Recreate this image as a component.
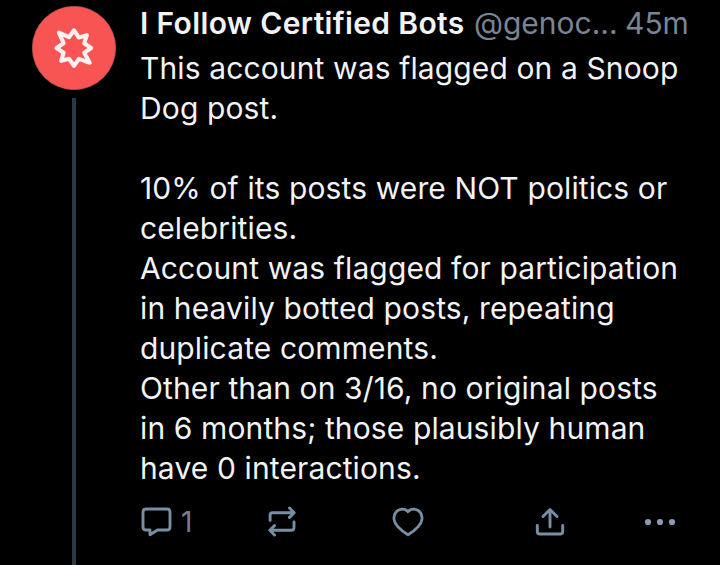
<script>
  const lines = [
    'This account was flagged on a Snoop',
    'Dog post.',
    '',
    '10% of its posts were NOT politics or',
    'celebrities.',
    'Account was flagged for participation',
    'in heavily botted posts, repeating',
    'duplicate comments.',
    'Other than on 3/16, no original posts',
    'in 6 months; those plausibly human',
    'have 0 interactions.'
  ];
</script>

<article class="post">
  <div class="rail">
    <svg class="avatar" width="84" height="84" viewBox="0 0 84 84" aria-label="Avatar">
      <circle cx="42" cy="42" r="41.7" fill="#f85454" stroke="#a95458" stroke-width=".7" />
      <path
        d="M42 24.3 L46.8 31.5 L54.9 29.2 L52.2 37.3 L59.2 42 L52.2 46.8 L57.7 56.8 L47 52.8 L42 59.8 L37 52.8 L29.2 54.8 L31.6 46.8 L24.5 42 L31.6 37.2 L26.9 26.6 L37 31.2 Z"
        fill="none" stroke="#fff1f1" stroke-width="4.1" stroke-linejoin="round" />
    </svg>
    <div class="thread"></div>
  </div>

  <div class="content">
    <header>
      <span class="name">I Follow Certified Bots</span>
      <span class="handle">@genoc...</span>
      <span class="time">45m</span>
    </header>
    <div class="body">{lines.join('\n')}</div>
    <footer>
      <button class="reply" aria-label="Reply">
        <svg width="36" height="36" viewBox="0 0 36 36">
          <path d="M7 5H27Q30 5 30 8V23Q30 26 27 26H17.5L10 30.7V26H6Q3 26 3 23V8Q3 5 6 5Z" />
        </svg>
        <span>1</span>
      </button>
      <button class="repost" aria-label="Repost">
        <svg width="36" height="36" viewBox="0 0 36 36">
          <path d="M6.1 16.5V11Q6.1 8.7 8.4 8.7H29M25.5 4L30.2 8.7L25.5 13.4M30 18V23.5Q30 26.3 27.2 26.3H7M10.5 21.6L5.8 26.3L10.5 31" />
        </svg>
      </button>
      <button class="like" aria-label="Like">
        <svg width="36" height="36" viewBox="0 0 36 36">
          <path d="M18 7.6C14.5 4 9 4.5 6 8.2C2.5 12.6 4 18.2 7.8 22.6C10.4 25.5 14 28.4 18 30.8C22 28.4 25.6 25.5 28.2 22.6C32 18.2 33.5 12.6 30 8.2C27 4.5 21.5 4 18 7.6Z" />
        </svg>
      </button>
      <button class="share" aria-label="Share">
        <svg width="36" height="36" viewBox="0 0 36 36">
          <path d="M18 23V6M11 12.5L18 5.5L25 12.5M5.3 21.5V27.5Q5.3 30 7.8 30H28.2Q30.7 30 30.7 27.5V21.5" />
        </svg>
      </button>
      <button class="more" aria-label="More">
        <svg width="36" height="36" viewBox="0 0 36 36">
          <g class="dots"><circle cx="6" cy="18" r="3.1" /><circle cx="18" cy="18" r="3.1" /><circle cx="30" cy="18" r="3.1" /></g>
        </svg>
      </button>
    </footer>
  </div>
</article>

<style>
  :global(body) { margin: 0; background: #000; }
  .post {
    display: flex;
    box-sizing: border-box;
    width: 720px;
    height: 565px;
    padding: 6px 0 0 32px;
    overflow: hidden;
    background: #000;
    color: #f1f3f5;
    font-family: Inter, sans-serif;
    font-size: 30px;
    line-height: 40px;
  }
  .rail { display: flex; flex-direction: column; align-items: center; width: 84px; margin-right: 24px; }
  .avatar { display: block; flex: none; }
  .thread { flex: 1; width: 4px; margin-top: 8px; background: #2b3845; }
  .content { flex: none; width: 560px; margin-top: -3px; }
  header { display: flex; height: 45px; white-space: nowrap; color: #798594; }
  .name { width: 334px; color: #f1f3f5; font-weight: 600; letter-spacing: 0.36px; }
  .handle { width: 151px; }
  .body { white-space: pre; height: 440px; letter-spacing: 0.12px; }
  footer { display: flex; align-items: center; height: 36px; margin-top: 16px; color: #788ea5; }
  button {
    display: flex;
    align-items: center;
    gap: 5px;
    padding: 0;
    border: 0;
    background: none;
    color: inherit;
    font: inherit;
    font-size: 28px;
  }
  .reply span { color: #75828f; }
  svg { display: block; }
  footer path { fill: none; stroke: currentColor; stroke-width: 2.9; stroke-linecap: round; stroke-linejoin: round; }
  .dots { fill: #8d99af; }
  .reply { width: 124px; }
  .repost { width: 126px; }
  .like { width: 142px; }
  .share { width: 110px; }
</style>
